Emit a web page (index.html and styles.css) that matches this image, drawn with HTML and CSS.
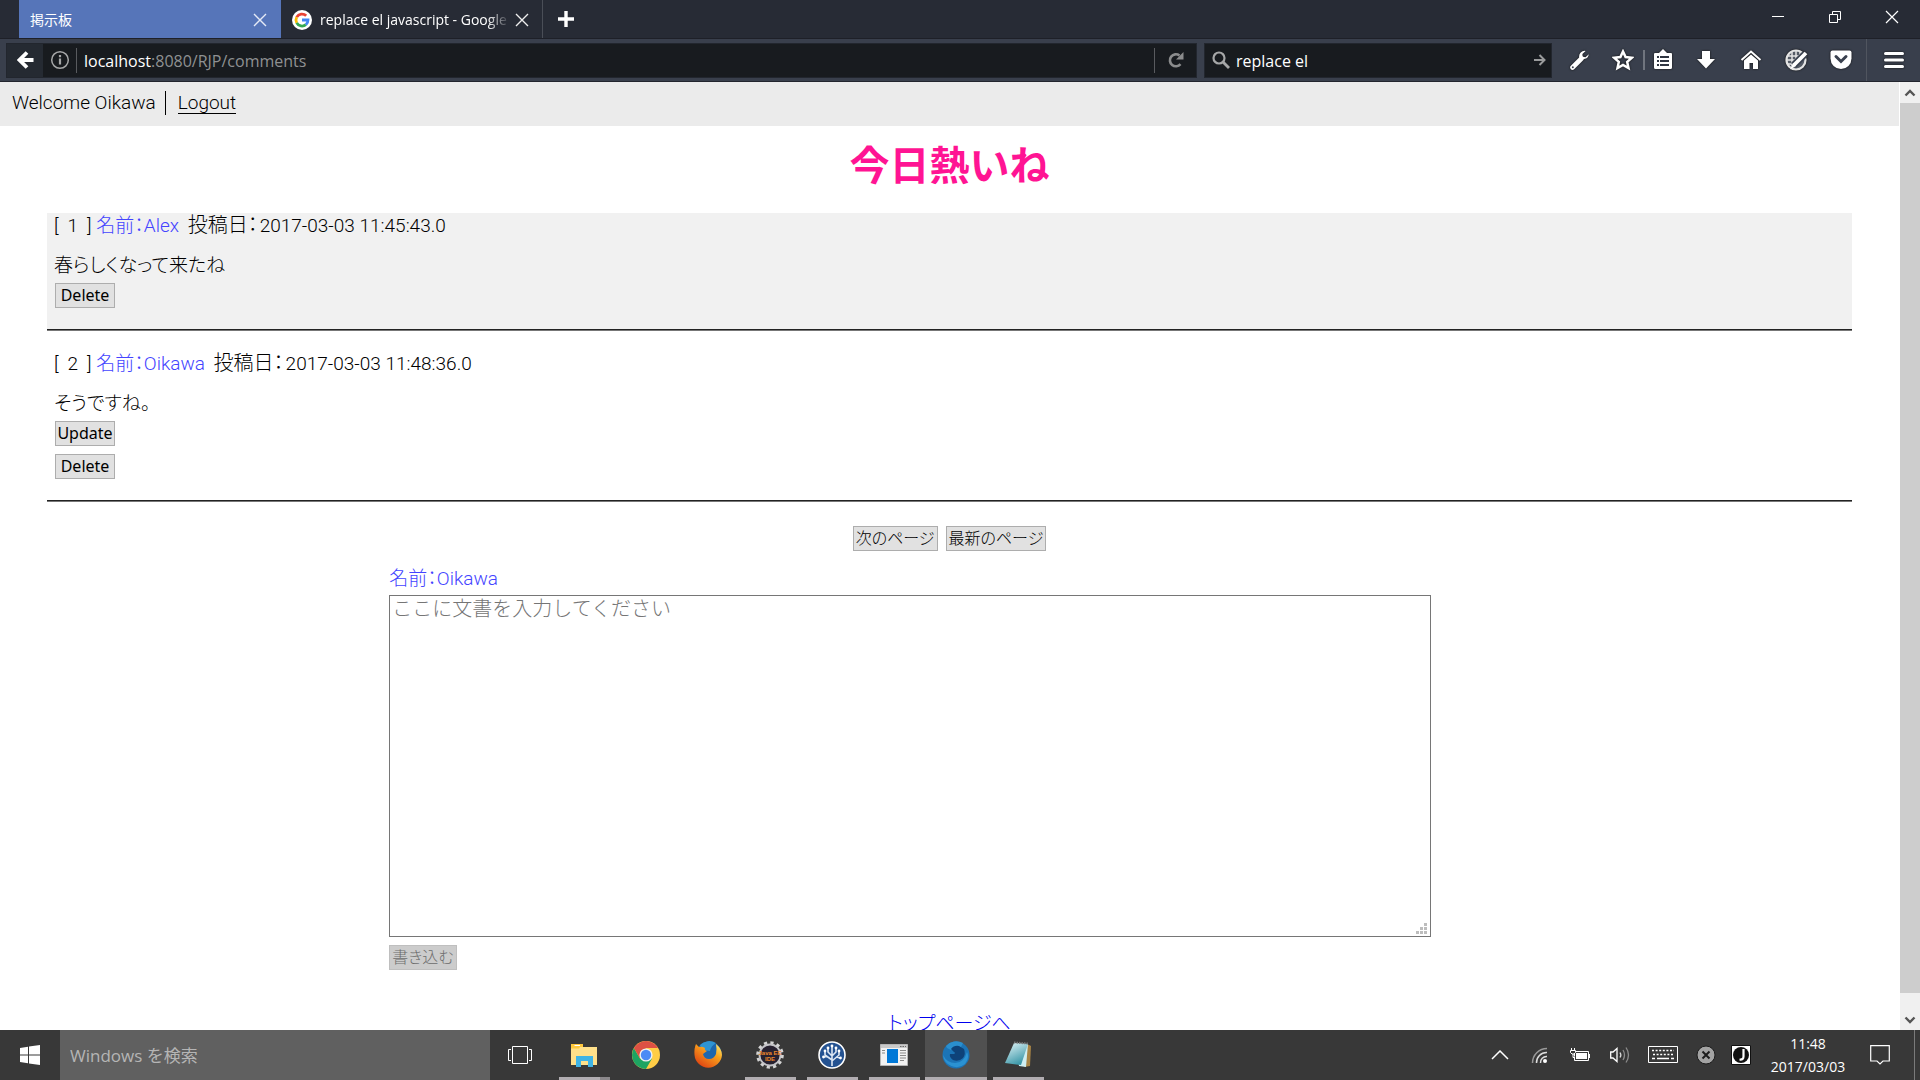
FILE: index.html
```html
<!DOCTYPE html>
<html lang="ja">
<head>
<meta charset="utf-8">
<title>掲示板</title>
<link rel="stylesheet" href="styles.css">
</head>
<body>
<header class="browser">
  <div class="tabstrip">
    <div class="tab tab-active">
      <span class="tab-title">掲示板</span>
      <button class="tab-close" aria-label="タブを閉じる"><svg width="14" height="14" viewBox="0 0 14 14"><path d="M1 1L13 13M13 1L1 13" stroke="#e4eaf6" stroke-width="1.4"/></svg></button>
    </div>
    <div class="tab">
      <svg class="favicon" width="20" height="20" viewBox="0 0 20 20"><circle cx="10" cy="10" r="10" fill="#fff"/><g fill="none" stroke-width="2.8"><path d="M14.2 5.8A6 6 0 0 0 4.7 7.2" stroke="#ea4335"/><path d="M4.7 7.2A6 6 0 0 0 4.7 12.8" stroke="#fbbc05"/><path d="M4.7 12.8A6 6 0 0 0 13.9 14.6" stroke="#34a853"/><path d="M10 10H16A6 6 0 0 1 13.9 14.6" stroke="#4285f4"/></g></svg>
      <span class="tab-title tab-title-fade">replace el javascript - Google</span>
      <button class="tab-close" aria-label="タブを閉じる"><svg width="14" height="14" viewBox="0 0 14 14"><path d="M1 1L13 13M13 1L1 13" stroke="#eee" stroke-width="1.4"/></svg></button>
    </div>
    <button class="newtab" aria-label="新しいタブ"><svg width="18" height="18" viewBox="0 0 18 18"><path d="M9 1V17M1 9H17" stroke="#fff" stroke-width="3.4"/></svg></button>
    <div class="window-controls">
      <button aria-label="最小化"><svg width="14" height="14" viewBox="0 0 14 14"><path d="M1 6.500H13" stroke="#fff"/></svg></button>
      <button aria-label="元に戻す"><svg width="14" height="14" viewBox="0 0 14 14"><path d="M1.500 4.500H9.500V12.500H1.500ZM4.500 4V1.500H12.500V9.500H10" fill="none" stroke="#fff"/></svg></button>
      <button aria-label="閉じる"><svg width="14" height="14" viewBox="0 0 14 14"><path d="M1 1L13 13M13 1L1 13" stroke="#fff" stroke-width="1.2"/></svg></button>
    </div>
  </div>
  <div class="toolbar">
    <div class="urlbar">
      <button class="back" aria-label="戻る"><svg width="18" height="18" viewBox="0 0 18 18"><path d="M10 1.500L2.500 9L10 16.500M3 9H16.500" fill="none" stroke="#fff" stroke-width="3.800"/></svg></button>
      <svg class="info" width="20" height="20" viewBox="0 0 20 20"><circle cx="10" cy="10" r="8.300" fill="none" stroke="#a6a7a8" stroke-width="1.500"/><path d="M10 8.500V14.500M10 5V7.200" stroke="#a6a7a8" stroke-width="2.200"/></svg>
      <span class="sep"></span>
      <div class="url"><b>localhost</b>:8080/RJP/comments</div>
      <span class="sep"></span>
      <button class="reload" aria-label="再読み込み"><svg width="16" height="18" viewBox="0 0 16 18"><path d="M12.500 13.200A6 6 0 1 1 11.500 4.500" fill="none" stroke="#8b8c8d" stroke-width="2.600"/><path d="M15.500 1V8.500H8Z" fill="#8b8c8d"/></svg></button>
    </div>
    <div class="searchbar">
      <svg width="18" height="18" viewBox="0 0 18 18"><circle cx="7" cy="7" r="5.500" fill="none" stroke="#a6a7a8" stroke-width="2.200"/><path d="M11 11L17 17" stroke="#a6a7a8" stroke-width="2.800"/></svg>
      <input type="text" value="replace el" aria-label="検索">
      <svg width="12" height="12" viewBox="0 0 12 12"><path d="M0 6H10M5.500 1L10.500 6L5.500 11" fill="none" stroke="#9a9b9c" stroke-width="2"/></svg>
    </div>
    <div class="tools">
      <button aria-label="開発ツール"><svg width="22" height="22" viewBox="0 0 22 22"><path d="M3.500 18.500L12.500 9.500" stroke="#fff" stroke-width="4.600" stroke-linecap="round"/><path d="M19.800 5.200L16.500 8.200L13.600 7.800L13.400 5L16.600 1.900A5.600 5.600 0 0 0 10.200 8.400A5.600 5.600 0 0 0 19.800 5.200Z" fill="#fff"/><circle cx="3.800" cy="18.200" r="1" fill="#39404e"/></svg></button>
      <button class="star" aria-label="ブックマーク"><svg width="22" height="22" viewBox="0 0 22 22"><path d="M11 2.500L13.600 8.100L19.800 8.800L15.200 12.900L16.500 19L11 15.900L5.500 19L6.800 12.900L2.200 8.800L8.400 8.100Z" fill="none" stroke="#fff" stroke-width="2.500"/></svg></button>
      <span class="sep sep-bold"></span>
      <button class="list" aria-label="ブックマーク一覧"><svg width="22" height="22" viewBox="0 0 22 22"><path d="M3 4H7L11 0L15 4H19Q20 4 20 5V18.500Q20 20 18.500 20H3.500Q2 20 2 18.500V5Q2 4 3 4Z" fill="#fff"/><path d="M5 8H7M8 8H17M5 12H7M8 12H17M5 16H7M8 16H17" stroke="#303642" stroke-width="2"/></svg></button>
      <button aria-label="ダウンロード"><svg width="22" height="22" viewBox="0 0 22 22"><path d="M7 2H15V10H20L11 19.500L2 10H7Z" fill="#fff"/></svg></button>
      <button aria-label="ホーム"><svg width="22" height="22" viewBox="0 0 22 22"><path d="M1.500 11L11 2.500L20.500 11" fill="none" stroke="#fff" stroke-width="2"/><path d="M4 11.500L11 5.500L18 11.500V20H13V14H9.500V20H4Z" fill="#fff"/></svg></button>
      <button aria-label="編集"><svg width="24" height="24" viewBox="0 0 24 24"><circle cx="12" cy="12" r="9.500" fill="#555b66" stroke="#e4e4e4" stroke-width="2.200"/><path d="M4 8H18M3 12H16M4 16H12M8 3V18M12 2V14M16 4V10" stroke="#e4e4e4" stroke-width="1.500"/><path d="M21 6L9.500 17.500" stroke="#39404e" stroke-width="7"/><path d="M22 5L10 17" stroke="#fff" stroke-width="3.800"/><path d="M9 15L12 18L6 21.500Z" fill="#fff"/></svg></button>
      <button aria-label="Pocket"><svg width="22" height="22" viewBox="0 0 22 22"><path d="M2.500 1.500H19.500Q21.500 1.500 21.500 3.500V9.500A10.500 10.500 0 0 1 .5 9.500V3.500Q.5 1.500 2.500 1.500Z" fill="#fff"/><path d="M6 7.500L11 12.500L16 7.500" fill="none" stroke="#39404e" stroke-width="3" stroke-linecap="round"/></svg></button>
      <span class="sep sep-tall"></span>
      <button class="menu" aria-label="メニュー"><svg width="20" height="18" viewBox="0 0 20 18"><path d="M1.500 2.500H18.500M1.500 9H18.500M1.500 15.500H18.500" stroke="#fff" stroke-width="3" stroke-linecap="round"/></svg></button>
    </div>
  </div>
</header>

<div class="viewport">
  <main class="page">
    <div class="userbar"><span class="welcome">Welcome Oikawa</span><a class="logout" href="#logout">Logout</a></div>
    <h1>今日熱いね</h1>
    <ul class="comments">
      <li class="comment comment-odd">
        <div class="meta">[<span class="number">1</span>] <span class="name">名前：Alex</span> <span class="posted">投稿日：</span><time>2017-03-03 11:45:43.0</time></div>
        <p>春らしくなって来たね</p>
        <div class="actions"><button>Delete</button></div>
      </li>
      <li class="comment">
        <div class="meta">[<span class="number">2</span>] <span class="name">名前：Oikawa</span> <span class="posted">投稿日：</span><time>2017-03-03 11:48:36.0</time></div>
        <p>そうですね。</p>
        <div class="actions"><button>Update</button><button>Delete</button></div>
      </li>
    </ul>
    <nav class="pager"><button>次のページ</button><button>最新のページ</button></nav>
    <form class="post">
      <label class="name" for="message">名前：Oikawa</label>
      <div class="field">
        <textarea id="message" placeholder="ここに文書を入力してください"></textarea>
        <svg class="grip" width="12" height="12" viewBox="0 0 12 12"><path d="M8 0h3v3h-3zM4 4h3v3h-3zM8 4h3v3h-3zM0 8h3v3h-3zM4 8h3v3h-3zM8 8h3v3h-3z" fill="#bdbdbd"/></svg>
      </div>
      <button type="submit" disabled>書き込む</button>
    </form>
    <p class="top"><a href="#top">トップページへ</a></p>
  </main>
  <div class="scrollbar">
    <button aria-label="上へ"><svg width="12" height="8" viewBox="0 0 12 8"><path d="M1.500 6.500L6 2L10.500 6.500" fill="none" stroke="#555" stroke-width="2.400"/></svg></button>
    <div class="thumb"></div>
    <button aria-label="下へ"><svg width="12" height="8" viewBox="0 0 12 8"><path d="M1.500 1.500L6 6L10.500 1.500" fill="none" stroke="#555" stroke-width="2.400"/></svg></button>
  </div>
</div>

<footer class="taskbar">
  <button class="start" aria-label="スタート"><svg width="20" height="20" viewBox="0 0 20 20"><path d="M0 3L8 1.800V9.500H0ZM9 1.600L20 0V9.500H9ZM0 10.500H8V18.200L0 17ZM9 10.500H20V20L9 18.400Z" fill="#fff"/></svg></button>
  <input class="tasksearch" type="text" placeholder="Windows を検索" aria-label="Windows を検索">
  <button class="app app-view" aria-label="タスク ビュー"><svg width="26" height="20" viewBox="0 0 26 20"><path d="M5.500 1.500H20.500V18.500H5.500ZM4 4.500H1.500V15.500H4M22 4.500H24.500V15.500H22" fill="none" stroke="#fff"/></svg></button>
  <button class="app app-open app-stack" aria-label="エクスプローラー"><svg width="28" height="28" viewBox="0 0 28 28"><path d="M1 3H13V6H27V24H1Z" fill="#ffe08a"/><path d="M1 3H13V6H10L9 7.500H1Z" fill="#ffc83d"/><path d="M4.500 4H10V5H4.500Z" fill="#fff"/><path d="M6 15H23V26H18V20H11V26H6Z" fill="#3fb4e5"/></svg></button>
  <button class="app" aria-label="Chrome"><svg width="28" height="28" viewBox="0 0 28 28"><circle cx="14" cy="14" r="14" fill="#ffcd46"/><path d="M1.900 7A14 14 0 0 0 14 28L20 17.500L14 14L8 17.500Z" fill="#1da462"/><path d="M1.900 7A14 14 0 0 1 26.100 7H14L8 17.500Z" fill="#dd5144"/><circle cx="14" cy="14" r="6.600" fill="#f1f1f1"/><circle cx="14" cy="14" r="5.200" fill="#4c8bf5"/></svg></button>
  <button class="app" aria-label="Firefox"><svg width="28" height="28" viewBox="0 0 28 28"><defs><linearGradient id="ff" x1="1" y1="0" x2="0.200" y2="1"><stop offset="0" stop-color="#fff27a"/><stop offset=".4" stop-color="#f9a31c"/><stop offset="1" stop-color="#dd3d12"/></linearGradient></defs><circle cx="15" cy="13" r="12.600" fill="#1e67ae"/><path d="M6 4A13 13 0 0 1 22 2Q17 5 16 10L8 9Z" fill="#2f94d2"/><path d="M2 3L5 6Q8 5 11 7Q10 9 13 10L9 13Q10 18 15 18Q20 18 22 13Q23 8 22 3Q28 8 28 14A13.800 13.800 0 0 1 .5 14Q0 7 2 3Z" fill="url(#ff)"/></svg></button>
  <button class="app app-open" aria-label="Eclipse Java EE IDE"><svg width="28" height="28" viewBox="0 0 28 28"><circle cx="14" cy="14" r="12.300" fill="none" stroke="#d4d4d4" stroke-width="3" stroke-dasharray="3.220 3.220"/><circle cx="14" cy="14" r="10.500" fill="#272130" stroke="#c4c4c8" stroke-width="1.800"/><text class="gear-text" x="14" y="14" text-anchor="middle">Java EE</text><text class="gear-text" x="14" y="20" text-anchor="middle">IDE</text></svg></button>
  <button class="app app-open" aria-label="SourceTree"><svg width="28" height="28" viewBox="0 0 28 28"><circle cx="14" cy="14" r="13" fill="#245291" stroke="#fff" stroke-width="1.600"/><path d="M14 25V5M14 19L7 14V10M14 15L10 11V7M14 20L21 14V10M14 15L18 11V7M9 15.500L5.500 16M18.500 16L22 17" fill="none" stroke="#dce6f3" stroke-width="1.600"/><g fill="#fff"><circle cx="14" cy="5" r="1.400"/><circle cx="7" cy="10" r="1.400"/><circle cx="10" cy="7" r="1.400"/><circle cx="18" cy="7" r="1.400"/><circle cx="21" cy="10" r="1.400"/><circle cx="5.500" cy="16" r="1.400"/><circle cx="22.500" cy="17" r="1.400"/></g></svg></button>
  <button class="app app-open" aria-label="アプリ"><svg width="28" height="24" viewBox="0 0 28 24"><path d="M.5 1.500H27.500V22.500H.5Z" fill="#f2f2f2" stroke="#b5b5b5"/><path d="M1 2H27V5H1Z" fill="#c9c9c9"/><path d="M20 3.500H26" stroke="#666" stroke-dasharray="1.500 1"/><path d="M7 6H18V20H7Z" fill="#0078d7"/><path d="M2 7.500H5M2 10H5M20 7.500H26M20 10H26M20 12.500H26M20 15H26M20 17.500H24" stroke="#8a8a8a"/></svg></button>
  <button class="app app-open app-current" aria-label="Firefox Developer Edition"><svg width="28" height="28" viewBox="0 0 28 28"><circle cx="14" cy="14" r="13.500" fill="#1c74b6"/><path d="M4 5A13.500 13.500 0 0 1 21 2L18 8L9 9L5 7Z" fill="#2a8fce"/><path d="M9 8Q12 4 17 5L22 8Q24 13 21 17Q17 21 11 19Q7 16 8 13L12 13Q14 12 12 11Z" fill="#0e4279"/><path d="M1 14Q5 22 13 22Q22 22 25 11Q28 17 23 23A13.500 13.500 0 0 1 1 14Z" fill="#2b92d2"/></svg></button>
  <button class="app app-open" aria-label="メモ帳"><svg width="28" height="28" viewBox="0 0 28 28"><defs><linearGradient id="np" x1="0" y1="0" x2="0.500" y2="1"><stop offset="0" stop-color="#e5f6f9"/><stop offset="1" stop-color="#3c98a9"/></linearGradient></defs><path d="M23 3L27 5L26 25L20 26Z" fill="#a78345"/><path d="M10 2L24 3L22 26L15 25Z" fill="#cfeef2"/><path d="M10 2L24 3L17 24L1 22Z" fill="url(#np)"/><path d="M10 1.500L24 2.500" stroke="#777" stroke-width="2" stroke-dasharray="1.500 1"/></svg></button>
  <div class="tray">
    <button aria-label="隠れているインジケーター"><svg width="18" height="10" viewBox="0 0 18 10"><path d="M1 9L9 1L17 9" fill="none" stroke="#fff" stroke-width="1.500"/></svg></button>
    <button aria-label="ネットワーク"><svg width="18" height="18" viewBox="0 0 18 18"><circle cx="14" cy="15" r="2" fill="#fff"/><path d="M9.500 17A6 6 0 0 1 16 10.500M5.500 17A10 10 0 0 1 16 6.500" fill="none" stroke="#ddd" stroke-width="1.500"/><path d="M1.500 17A14.500 14.500 0 0 1 16 2.500" fill="none" stroke="#999" stroke-width="1.500"/></svg></button>
    <button aria-label="バッテリー"><svg width="20" height="14" viewBox="0 0 20 14"><path d="M4.500 3.500H18.500V12.500H4.500ZM19.500 6V10" fill="none" stroke="#fff"/><path d="M6 5H17V11H6Z" fill="#fff"/><path d="M1.500 0V2.500M4.500 0V2.500" stroke="#fff"/><path d="M.5 2.500H5.500V4.500L4 6H2L.5 4.500ZM3 6V9.500H5" fill="#383838" stroke="#fff"/></svg></button>
    <button aria-label="音量"><svg width="20" height="18" viewBox="0 0 20 18"><path d="M.7 6H3L7 2.500V15.500L3 12H.7Z" fill="none" stroke="#fff" stroke-width="1.300"/><path d="M10 6.500Q11.700 9 10 11.500" fill="none" stroke="#ddd" stroke-width="1.300"/><path d="M13 4Q16 9 13 14M16 1.500Q21 9 16 16.500" fill="none" stroke="#8c8c8c" stroke-width="1.300"/></svg></button>
    <button class="t-key" aria-label="キーボード"><svg width="30" height="18" viewBox="0 0 30 18"><path d="M.5.5H29.500V16.500H.5Z" fill="none" stroke="#fff"/><path d="M4 4.500H26M5 8.500H26" stroke="#fff" stroke-width="1.500" stroke-dasharray="2 1.600"/><path d="M4 12.500H7M9 12.500H21M23 12.500H26" stroke="#fff" stroke-width="1.300"/></svg></button>
    <button aria-label="状態"><svg width="20" height="20" viewBox="0 0 20 20"><circle cx="10" cy="10" r="9" fill="#a3a3a3" stroke="#1d1d1d"/><path d="M6.500 6.500L13.500 13.500M13.500 6.500L6.500 13.500" stroke="#1d1d1d" stroke-width="2"/></svg></button>
    <button class="t-ime" aria-label="IME"><svg width="20" height="20" viewBox="0 0 20 20"><path d="M.5.5H19.500V19.500H.5Z" fill="#fff" stroke="#111"/><circle cx="10" cy="10" r="8" fill="#111"/><path d="M12.500 4V11.500Q12.500 15 8.500 14.500" fill="none" stroke="#fff" stroke-width="2.200"/></svg></button>
    <div class="clock"><span>11:48</span><span>2017/03/03</span></div>
    <button class="t-note" aria-label="通知"><svg width="20" height="20" viewBox="0 0 20 20"><path d="M.7.7H19.300V16H13L10 19L7 16H.7Z" fill="none" stroke="#fff" stroke-width="1.200"/></svg></button>
  </div>
</footer>
</body>
</html>
```
FILE: styles.css
```css
* { box-sizing: border-box; }

body {
  margin: 0;
  height: 100vh;
  display: flex;
  flex-direction: column;
  overflow: hidden;
  background: #fff;
  color: #000;
  font: 300 19px/22px Roboto, "Noto Sans CJK JP", sans-serif;
  font-feature-settings: "palt";
}

button { margin: 0; padding: 0; border: 0; background: none; font: inherit; color: inherit; }
svg { display: block; flex: none; }

/* browser chrome */
.browser { flex: none; font: 400 16px/20px "Open Sans", "Noto Sans CJK JP", sans-serif; color: #fff; }

.tabstrip { display: flex; height: 39px; padding-left: 19px; background: #272b35; border-bottom: 1px solid #1e2028; }
.tab { display: flex; align-items: center; width: 262px; padding: 2px 13px 0 11px; gap: 8px; border-right: 1px solid #4a4e57; font-size: 14px; }
.tab-active { background: #5675b9; border-right-color: #5675b9; }
.tab-title { flex: 1; min-width: 0; overflow: hidden; white-space: nowrap; }
.tab-title-fade { margin-right: -3px; -webkit-mask-image: linear-gradient(90deg, #000 88%, transparent); mask-image: linear-gradient(90deg, #000 88%, transparent); }
.newtab { width: 46px; display: grid; place-items: center; }
.window-controls { margin-left: auto; display: flex; height: 34px; }
.window-controls button { width: 57px; display: grid; place-items: center; }

.toolbar { display: flex; align-items: center; height: 43px; padding-left: 6px; background: #393f4c; border-bottom: 1px solid #22252e; }
.urlbar, .searchbar { display: flex; align-items: center; height: 35px; background: #181b1f; border: 1px solid #22262e; }
.urlbar { flex: 1; margin-right: 7px; }
.back { width: 36px; height: 33px; padding-left: 2px; display: grid; place-items: center; background: #252a32; }
.info { margin: 0 6px 0 7px; }
.sep { flex: none; width: 1px; height: 25px; background: #595b5f; }
.url { flex: 1; padding: 2px 0 0 7px; color: #8f9192; }
.url b { font-weight: 400; color: #fff; }
.reload { width: 41px; display: grid; place-items: center; }
.searchbar { width: 348px; padding: 0 5px 0 7px; gap: 6px; }
.searchbar input { flex: 1; min-width: 0; padding: 2px 0 0; border: 0; outline: 0; background: none; font: inherit; color: #fff; }
.tools { display: flex; align-items: center; height: 100%; padding-left: 5px; }
.tools button { width: 45px; display: grid; place-items: center; filter: drop-shadow(0 0 1px #111); }
.tools .star { width: 41px; }
.tools .list { width: 35px; margin-right: 3px; }
.sep-bold { width: 2px; height: 20px; background: #70757e; }
.sep-tall { height: 100%; margin-left: 3px; background: #50555f; }
.tools .menu { width: 53px; }

/* page */
.viewport { flex: 1; min-height: 0; display: flex; }
.page { flex: 1; overflow: hidden; }
.userbar { display: flex; align-items: center; height: 44px; padding: 0 12px 2px; background: #ebebeb; }
.welcome { padding: 1px 9px 1px 0; border-right: 1px solid #000; }
.logout { margin-left: 12px; color: #000; text-decoration: none; border-bottom: 1px solid #000; line-height: 20px; }
h1 { margin: 11px 0 16px; text-align: center; font-size: 40px; line-height: 60px; font-weight: 700; color: #ff1493; font-feature-settings: normal; }

.comments { margin: 0 47px; padding: 0; list-style: none; }
.comment { padding: 1px 7px 21px; border-bottom: 2px solid #777; border-bottom-style: groove; }
.comment + .comment { margin-top: 20px; }
.comment-odd { background: #f1f1f1; }
.comment p { margin: 18px 0 6px; }
.number { padding: 0 9px; }
.name { margin-right: 4px; color: #4444ff; }
.posted { margin-right: 2px; font-size: 20px; }
.actions { display: flex; flex-direction: column; align-items: flex-start; gap: 8px; padding-left: 1px; }
.actions button, .pager button, .post button { height: 25px; padding: 0 2px; background: #e1e1e1; border: 1px solid #adadad; line-height: 23px; }
.actions button { width: 60px; padding: 0; font: 400 16px/23px "Noto Sans", sans-serif; }
.pager { display: flex; justify-content: center; gap: 8px; margin-top: 24px; }
.pager button, .post button { font-size: 16px; }

.post { width: 59%; margin: 17px auto 0; }
.post label { display: block; margin-bottom: 5px; }
.field { position: relative; width: 93%; }
.field textarea { display: block; width: 100%; height: 342px; padding: 2px; border: 1px solid #767676; border-radius: 0; outline: 0; resize: none; background: #fff; font: inherit; font-size: 20px; font-feature-settings: normal; }
.field textarea::placeholder { color: #757575; }
.grip { position: absolute; right: 3px; bottom: 2px; }
.post button { margin-top: 8px; background: #ccc; border-color: #bfbfbf; color: #6d6d6d; }
.top { margin: 43px 0 0; text-align: center; }
.top a { color: #00e; text-underline-offset: 4px; }

.scrollbar { width: 21px; display: flex; flex-direction: column; background: #f0f0f0; border-left: 1px solid #fff; }
.scrollbar button { flex: none; height: 21px; display: grid; place-items: center; }
.thumb { flex: 1; margin-bottom: 16px; background: #cdcdcd; }

/* taskbar */
.taskbar { flex: none; display: flex; height: 50px; background: #383838; color: #fff; font: 400 16px/22px "Open Sans", "Noto Sans CJK JP", sans-serif; }
.start { width: 60px; display: grid; place-items: center; }
.tasksearch { width: 430px; padding: 2px 10px 0; border: 0; outline: 0; border-radius: 0; background: #606060; font: inherit; font-size: 17px; color: #fff; }
.tasksearch::placeholder { color: #b5b5b5; }
.app { position: relative; width: 62px; display: grid; place-items: center; }
.app-open::after { content: ""; position: absolute; left: 6px; right: 5px; bottom: 0; height: 3px; background: #b1adb1; }
.app-stack::after { background: linear-gradient(90deg, #b1adb1 41px, #8b888b 41px); }
.app-view { width: 63px; padding-right: 3px; }
.app-current { background: #505050; }
.app-current::after { left: 0; right: 0; }
.gear-text { font: 700 6px "Liberation Sans", sans-serif; fill: #f08a2c; }

.tray { margin-left: auto; display: flex; align-items: center; padding-right: 5px; }
.tray button { width: 40px; display: grid; place-items: center; }
.tray .t-key { width: 46px; }
.tray .t-ime { width: 30px; }
.tray .clock { width: 89px; padding-left: 15px; display: flex; flex-direction: column; align-items: center; font-size: 14px; line-height: 23px; }
.tray .t-note { width: 70px; height: 100%; border-right: 1px solid #7a7a7a; }
```
